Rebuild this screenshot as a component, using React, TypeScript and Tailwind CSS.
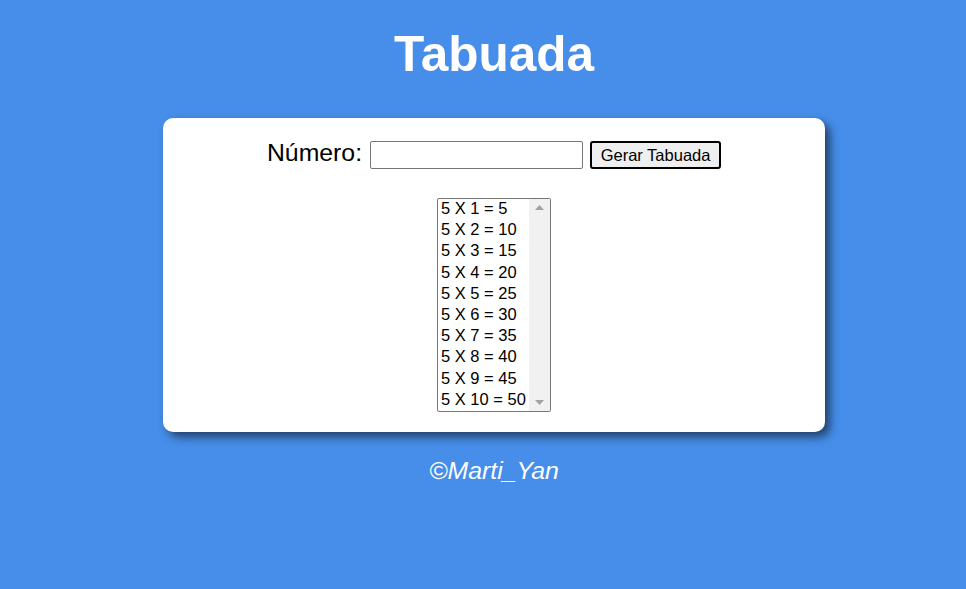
import React from 'react';

const linhas = Array.from({ length: 10 }, (_, i) => `5 X ${i + 1} = ${5 * (i + 1)}`);

const App: React.FC = () => {
  return (
    <div className="min-h-screen w-full bg-[#468ee9] flex flex-col items-center pt-[26px] pl-[22px] font-['Liberation_Sans',Arial,sans-serif]">
      <h1 className="text-[49.5px] font-bold text-white leading-[56px]">Tabuada</h1>

      <div className="mt-[36px] w-[662px] h-[314px] bg-white rounded-[10px] shadow-[5px_5px_10px_rgba(0,0,0,0.55)] flex flex-col items-center pt-[23px]">
        <div className="flex items-center h-[28px]">
          <label className="text-[24.8px] text-black leading-[28px] mr-[8px] pb-[4px]">Número:</label>
          <input
            type="number"
            className="w-[213px] h-[28px] border border-[#767676] rounded-[2px] bg-white outline-none px-1 text-[16px]"
          />
          <button className="ml-[7px] h-[28px] w-[131px] border-2 border-black rounded-[3px] bg-[#efefef] text-[16.5px] text-black leading-none">
            Gerar Tabuada
          </button>
        </div>

        <div className="mt-[29px] w-[114px] h-[214px] border border-[#767676] rounded-[2px] flex overflow-hidden">
          <div className="flex-1 pl-[3px] -mt-[1px]">
            {linhas.map((l) => (
              <div key={l} className="h-[21.2px] leading-[21px] text-[16.5px] text-black whitespace-nowrap">
                {l}
              </div>
            ))}
          </div>
          <div className="w-[21px] shrink-0 bg-[#f1f1f1] flex flex-col justify-between items-center py-[6px]">
            <svg width="9" height="5" viewBox="0 0 9 5">
              <polygon points="0,5 4.5,0 9,5" fill="#a3a3a3" />
            </svg>
            <svg width="9" height="5" viewBox="0 0 9 5">
              <polygon points="0,0 4.5,5 9,0" fill="#a3a3a3" />
            </svg>
          </div>
        </div>
      </div>

      <p className="mt-[25px] text-[24.8px] italic text-white leading-[28px]">©Marti_Yan</p>
    </div>
  );
};

export default App;
